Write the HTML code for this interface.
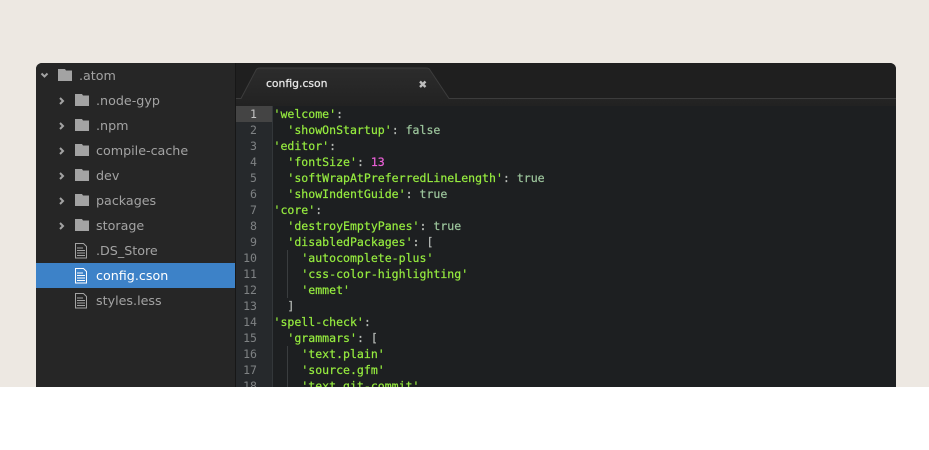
<!DOCTYPE html>
<html><head><meta charset="utf-8">
<style>
html,body{margin:0;padding:0;width:929px;height:450px;overflow:hidden;background:#fff}
#bg{position:absolute;left:0;top:0;width:929px;height:387px;background:#ede8e2;overflow:hidden}
#win{position:absolute;left:36px;top:63px;width:860px;height:340px;background:#1d1f21;border-radius:6px 6px 0 0;overflow:hidden}
#side{position:absolute;left:0;top:0;width:199px;height:340px;background:#262626;border-right:1px solid #171717}
#sel{position:absolute;left:0;top:200px;width:199px;height:25px;background:#3d82c8}
.t{position:absolute;font:12.7px/25px "DejaVu Sans",sans-serif;color:#a3a3a3;white-space:pre}
.ic{position:absolute}
#tabs{position:absolute;left:200px;top:0;width:660px;height:43px;background:#1f1f1f;border-bottom:1px solid #0f0f0f}
#code{position:absolute;left:200px;top:43px;width:660px;height:297px;background:#1d1f21}
#gut{position:absolute;left:0;top:0;width:37px;height:297px;background:#26292c;border-right:1px solid #33373a;box-sizing:border-box}
#cur{position:absolute;left:0;top:0;width:37px;height:16px;background:#444}
.n{position:absolute;left:0;width:21px;text-align:right;font:11.55px/16px "DejaVu Sans Mono",monospace;color:#7f8284}
.l{position:absolute;left:37.500px;font:11.55px/16px "DejaVu Sans Mono",monospace;color:#b8bcb8;white-space:pre;-webkit-text-stroke:.2px currentColor}
.l b{font-weight:normal;color:#96ec3f}
.l i{font-style:normal;color:#9dc69d}
.l u{text-decoration:none;color:#ec60d8}
.g{position:absolute;width:1px;background:#3a3d3f}
</style></head><body>
<div id="bg">
<div id="win">
 <div id="side">
  <div id="sel"></div>
  <svg class="ic" style="left:0;top:0" width="199" height="250" viewBox="0 0 199 250">
   <path d="M5.500 10.500l3 3 3-3" fill="none" stroke="#a3a3a3" stroke-width="2"/>
   <g fill="none" stroke="#a3a3a3" stroke-width="2">
    <path d="M24 35l3 3-3 3"/><path d="M24 60l3 3-3 3"/><path d="M24 85l3 3-3 3"/><path d="M24 110l3 3-3 3"/><path d="M24 135l3 3-3 3"/><path d="M24 160l3 3-3 3"/>
   </g>
   <g fill="#a3a3a3">
    <path d="M22 6h7l1 1.500h6v10.500h-14z"/>
    <path d="M39 31h7l1 1.500h6v10.500h-14z"/>
    <path d="M39 56h7l1 1.500h6v10.500h-14z"/>
    <path d="M39 81h7l1 1.500h6v10.500h-14z"/>
    <path d="M39 106h7l1 1.500h6v10.500h-14z"/>
    <path d="M39 131h7l1 1.500h6v10.500h-14z"/>
    <path d="M39 156h7l1 1.500h6v10.500h-14z"/>
   </g>
   <g fill="none" stroke="#a3a3a3" stroke-width="1">
    <path d="M39.500 180.500h8l3 3v11.500h-11z"/><path d="M41 185h6M41 187.500h8M41 190h8M41 192.500h8"/>
    <path d="M39.500 230.500h8l3 3v11.500h-11z"/><path d="M41 235h6M41 237.500h8M41 240h8M41 242.500h8"/>
   </g>
   <g fill="none" stroke="#fff" stroke-width="1">
    <path d="M39.500 205.500h8l3 3v11.500h-11z"/><path d="M41 210h6M41 212.500h8M41 215h8M41 217.500h8"/>
   </g>
  </svg>
  <div class="t" style="left:43px;top:0">.atom</div>
  <div class="t" style="left:60px;top:25px">.node-gyp</div>
  <div class="t" style="left:60px;top:50px">.npm</div>
  <div class="t" style="left:60px;top:75px">compile-cache</div>
  <div class="t" style="left:60px;top:100px">dev</div>
  <div class="t" style="left:60px;top:125px">packages</div>
  <div class="t" style="left:60px;top:150px">storage</div>
  <div class="t" style="left:60px;top:175px">.DS_Store</div>
  <div class="t" style="left:60px;top:200px;color:#fff">config.cson</div>
  <div class="t" style="left:60px;top:225px">styles.less</div>
 </div>
 <div id="tabs">
  <svg width="660" height="43" style="position:absolute;left:0;top:0">
   <defs><linearGradient id="tg" x1="0" y1="0" x2="0" y2="1"><stop offset="0" stop-color="#2c2c2c"/><stop offset="1" stop-color="#222"/></linearGradient></defs>
   <path d="M0 35.500H5L20 7Q21 5 24 5H190Q193 5 194 7L213 35.500H660V43H0Z" fill="url(#tg)"/>
   <path d="M0 35.500H5L20 7Q21 5 24 5H190Q193 5 194 7L213 35.500H660" fill="none" stroke="#3c3c3c" stroke-width="1"/>
   <path d="M184 18.500l5.500 5.500M189.500 18.500l-5.500 5.500" stroke="#bdbdbd" stroke-width="2.400" fill="none"/>
  </svg>
  <div class="t" style="left:30px;top:8px;color:#e8e8e8;font-size:10.8px;-webkit-text-stroke:.25px #e8e8e8">config.cson</div>
 </div>
 <div id="code">
  <div id="gut"><div id="cur"></div>
   <div class="n" style="top:0;color:#c4c4c4">1</div><div class="n" style="top:16px">2</div><div class="n" style="top:32px">3</div><div class="n" style="top:48px">4</div><div class="n" style="top:64px">5</div><div class="n" style="top:80px">6</div><div class="n" style="top:96px">7</div><div class="n" style="top:112px">8</div><div class="n" style="top:128px">9</div><div class="n" style="top:144px">10</div><div class="n" style="top:160px">11</div><div class="n" style="top:176px">12</div><div class="n" style="top:192px">13</div><div class="n" style="top:208px">14</div><div class="n" style="top:224px">15</div><div class="n" style="top:240px">16</div><div class="n" style="top:256px">17</div><div class="n" style="top:272px">18</div>
  </div>
  <div class="g" style="left:36px;top:0;height:297px;background:#33373a"></div>
  <div class="g" style="left:51px;top:144px;height:48px"></div>
  <div class="g" style="left:51px;top:240px;height:57px"></div>
  <div class="l" style="top:0"><b>'welcome'</b>:</div>
  <div class="l" style="top:16px">  <b>'showOnStartup'</b>: <i>false</i></div>
  <div class="l" style="top:32px"><b>'editor'</b>:</div>
  <div class="l" style="top:48px">  <b>'fontSize'</b>: <u>13</u></div>
  <div class="l" style="top:64px">  <b>'softWrapAtPreferredLineLength'</b>: <i>true</i></div>
  <div class="l" style="top:80px">  <b>'showIndentGuide'</b>: <i>true</i></div>
  <div class="l" style="top:96px"><b>'core'</b>:</div>
  <div class="l" style="top:112px">  <b>'destroyEmptyPanes'</b>: <i>true</i></div>
  <div class="l" style="top:128px">  <b>'disabledPackages'</b>: [</div>
  <div class="l" style="top:144px">    <b>'autocomplete-plus'</b></div>
  <div class="l" style="top:160px">    <b>'css-color-highlighting'</b></div>
  <div class="l" style="top:176px">    <b>'emmet'</b></div>
  <div class="l" style="top:192px">  ]</div>
  <div class="l" style="top:208px"><b>'spell-check'</b>:</div>
  <div class="l" style="top:224px">  <b>'grammars'</b>: [</div>
  <div class="l" style="top:240px">    <b>'text.plain'</b></div>
  <div class="l" style="top:256px">    <b>'source.gfm'</b></div>
  <div class="l" style="top:272px">    <b>'text.git-commit'</b></div>
 </div>
</div>
</div>
</body></html>
